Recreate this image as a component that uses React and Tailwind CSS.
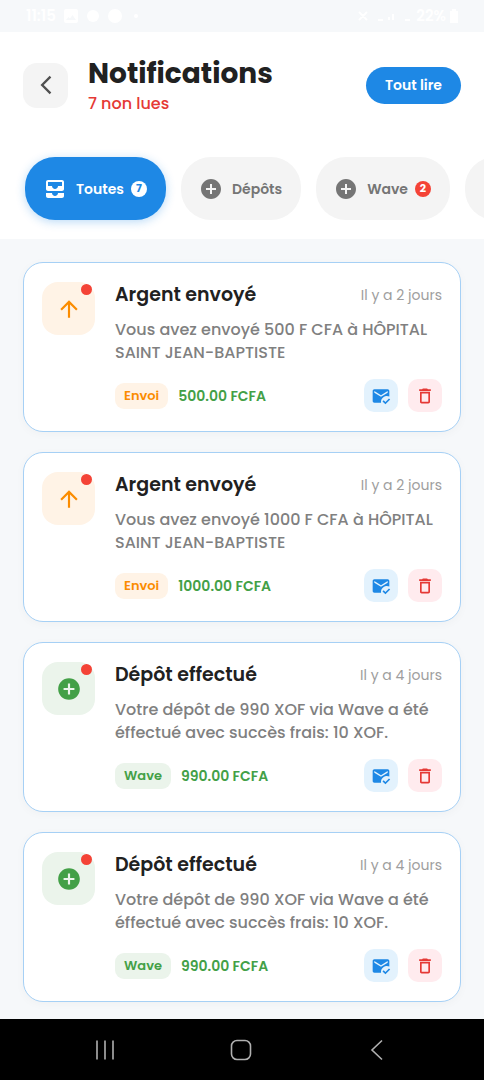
import clsx from 'clsx'
import {
  MdAddCircle,
  MdAllInbox,
  MdArrowBackIosNew,
  MdArrowUpward,
  MdDeleteOutline,
  MdMarkEmailRead,
} from 'react-icons/md'

const filters = [
  { id: 'all', label: 'Toutes', icon: MdAllInbox, count: 7, active: true },
  { id: 'deposits', label: 'Dépôts', icon: MdAddCircle },
  { id: 'wave', label: 'Wave', icon: MdAddCircle, count: 2 },
  { id: 'sent', icon: MdArrowUpward },
]

const notifications = [
  {
    id: 1,
    type: 'send',
    title: 'Argent envoyé',
    time: 'Il y a 2 jours',
    message: 'Vous avez envoyé 500 F CFA à HÔPITAL SAINT JEAN-BAPTISTE',
    tag: 'Envoi',
    amount: '500.00 FCFA',
  },
  {
    id: 2,
    type: 'send',
    title: 'Argent envoyé',
    time: 'Il y a 2 jours',
    message: 'Vous avez envoyé 1000 F CFA à HÔPITAL SAINT JEAN-BAPTISTE',
    tag: 'Envoi',
    amount: '1000.00 FCFA',
  },
  {
    id: 3,
    type: 'deposit',
    title: 'Dépôt effectué',
    time: 'Il y a 4 jours',
    message: 'Votre dépôt de 990 XOF via Wave a été éffectué avec succès frais: 10 XOF.',
    tag: 'Wave',
    amount: '990.00 FCFA',
  },
  {
    id: 4,
    type: 'deposit',
    title: 'Dépôt effectué',
    time: 'Il y a 4 jours',
    message: 'Votre dépôt de 990 XOF via Wave a été éffectué avec succès frais: 10 XOF.',
    tag: 'Wave',
    amount: '990.00 FCFA',
  },
]

const types = {
  send: { icon: MdArrowUpward, box: 'bg-[#fff3e6] text-[#fb8c00]' },
  deposit: { icon: MdAddCircle, box: 'bg-[#ebf4eb] text-[#43a047]' },
}

function StatusBar() {
  return (
    <div className="flex h-8 items-center justify-between px-[26px] text-[15px] font-semibold text-white">
      <div className="flex items-center gap-2">
        <span>11:15</span>
        <svg className="h-[14px] w-[14px]" viewBox="0 0 14 14" fill="currentColor">
          <path fillRule="evenodd" d="M2 0h10a2 2 0 012 2v10a2 2 0 01-2 2H2a2 2 0 01-2-2V2a2 2 0 012-2zm0 11h10L8.500 6 6 9.500 4.500 8z" />
        </svg>
        <svg className="h-[14px] w-[14px]" viewBox="0 0 14 14" fill="currentColor">
          <circle cx="7" cy="7" r="6" />
        </svg>
        <svg className="h-[14px] w-[14px]" viewBox="0 0 14 14" fill="currentColor">
          <circle cx="7" cy="7" r="7" />
        </svg>
        <span className="ml-1 h-1 w-1 rounded-full bg-white" />
      </div>
      <div className="flex items-center gap-1">
        <svg className="h-[14px] w-[54px]" viewBox="0 0 54 14" fill="none" stroke="currentColor" strokeWidth="2">
          <path d="M1 3l8 8M9 3l-8 8M20 11h5M31 11V8M35 11V5M47 11h5" />
        </svg>
        <span>22%</span>
        <svg className="h-[14px] w-2" viewBox="0 0 8 14" fill="currentColor">
          <path d="M2 0h4v2h2v12H0V2h2z" />
        </svg>
      </div>
    </div>
  )
}

function FilterChip({ label, icon: Icon, count, active }) {
  return (
    <button
      type="button"
      aria-pressed={!!active}
      className={clsx(
        'flex h-[63px] shrink-0 items-center gap-[9px] rounded-[30px] pr-[19px] pl-[18px] text-sm font-semibold',
        active
          ? 'bg-[#1e88e5] text-white shadow-[0_2px_10px_rgba(30,136,229,0.3)]'
          : 'bg-[#f4f4f4] text-[#757575]',
      )}
    >
      <Icon className="h-6 w-6" />
      {label}
      {count && (
        <span
          className={clsx(
            '-ml-[2px] flex h-4 w-4 items-center justify-center rounded-full text-[11px] font-bold',
            active ? 'bg-white text-[#1e88e5]' : 'bg-[#f44336] text-white',
          )}
        >
          {count}
        </span>
      )}
    </button>
  )
}

function NotificationCard({ type, title, time, message, tag, amount }) {
  const { icon: Icon, box } = types[type]

  return (
    <li className="flex gap-5 rounded-[20px] border border-[#a6d0f5] bg-white px-[18px] py-[19px] shadow-[0_2px_10px_rgba(0,0,0,0.03)]">
      <div className={clsx('relative flex h-[53px] w-[53px] shrink-0 items-center justify-center rounded-2xl', box)}>
        <Icon className="h-[26px] w-[26px]" />
        <span className="absolute top-[2px] right-[3px] h-[11px] w-[11px] rounded-full bg-[#f44336]" />
      </div>
      <div className="min-w-0 flex-1">
        <div className="flex items-center justify-between">
          <h2 className="text-[19px] leading-[26px] font-semibold text-[#212121]">{title}</h2>
          <span className="text-sm text-[#9e9e9e]">{time}</span>
        </div>
        <p className="mt-[10px] text-base leading-[23px] font-medium text-[#808080]">{message}</p>
        <div className="mt-[15px] flex items-center">
          <span className={clsx('rounded-[9px] px-[9px] text-[13px] leading-[26px] font-semibold', box)}>{tag}</span>
          <span className="ml-[10px] text-sm font-semibold text-[#43a047]">{amount}</span>
          <button
            type="button"
            aria-label="Marquer comme lu"
            className="ml-auto flex h-[33px] w-[34px] items-center justify-center rounded-[10px] bg-[#e3f2fd] text-[#1e88e5]"
          >
            <MdMarkEmailRead className="h-5 w-5" />
          </button>
          <button
            type="button"
            aria-label="Supprimer"
            className="ml-[10px] flex h-[33px] w-[34px] items-center justify-center rounded-[10px] bg-[#ffebee] text-[#e53935]"
          >
            <MdDeleteOutline className="h-5 w-5" />
          </button>
        </div>
      </div>
    </li>
  )
}

function SystemNav() {
  return (
    <nav className="flex h-[61px] items-center justify-around bg-black pr-[39px] pl-[37px] text-[#b0b0b0]">
      <button type="button" aria-label="Applications récentes">
        <svg className="h-6 w-6" viewBox="0 0 24 24" fill="none" stroke="currentColor" strokeWidth="1.600">
          <path d="M4 2.500v19M12 2.500v19M20 2.500v19" />
        </svg>
      </button>
      <button type="button" aria-label="Accueil">
        <svg className="h-6 w-6" viewBox="0 0 24 24" fill="none" stroke="currentColor" strokeWidth="1.600">
          <rect x="2.500" y="2.500" width="19" height="19" rx="5.500" />
        </svg>
      </button>
      <button type="button" aria-label="Retour">
        <svg className="h-6 w-6" viewBox="0 0 24 24" fill="none" stroke="currentColor" strokeWidth="1.600">
          <path d="M17 2.500L7 12l10 9.500" />
        </svg>
      </button>
    </nav>
  )
}

export default function App() {
  return (
    <div className="flex min-h-screen flex-col bg-[#f6f8fa] font-['Poppins','Inter',sans-serif]">
      <StatusBar />
      <header className="bg-white pt-[23px] pb-[19px]">
        <div className="flex items-center px-[23px]">
          <button
            type="button"
            aria-label="Retour"
            className="flex h-[45px] w-[45px] items-center justify-center rounded-[14px] bg-[#f4f4f4] text-[#505050]"
          >
            <MdArrowBackIosNew className="h-[22px] w-[22px]" />
          </button>
          <div className="ml-5 flex-1">
            <h1 className="text-[28px] leading-[38px] font-bold text-[#212121]">Notifications</h1>
            <p className="text-base leading-[22px] font-medium text-[#e53935]">7 non lues</p>
          </div>
          <button
            type="button"
            className="h-[37px] rounded-full bg-[#1e88e5] px-[19px] text-sm font-semibold text-white"
          >
            Tout lire
          </button>
        </div>
        <div className="mt-[22px] -mb-[19px] flex gap-[15px] overflow-hidden pt-5 pb-[19px] pl-[25px]">
          {filters.map((f) => (
            <FilterChip key={f.id} {...f} />
          ))}
        </div>
      </header>
      <main className="flex-1 px-[23px] pt-[23px] pb-[17px]">
        <ul className="flex flex-col gap-5">
          {notifications.map((n) => (
            <NotificationCard key={n.id} {...n} />
          ))}
        </ul>
      </main>
      <SystemNav />
    </div>
  )
}
